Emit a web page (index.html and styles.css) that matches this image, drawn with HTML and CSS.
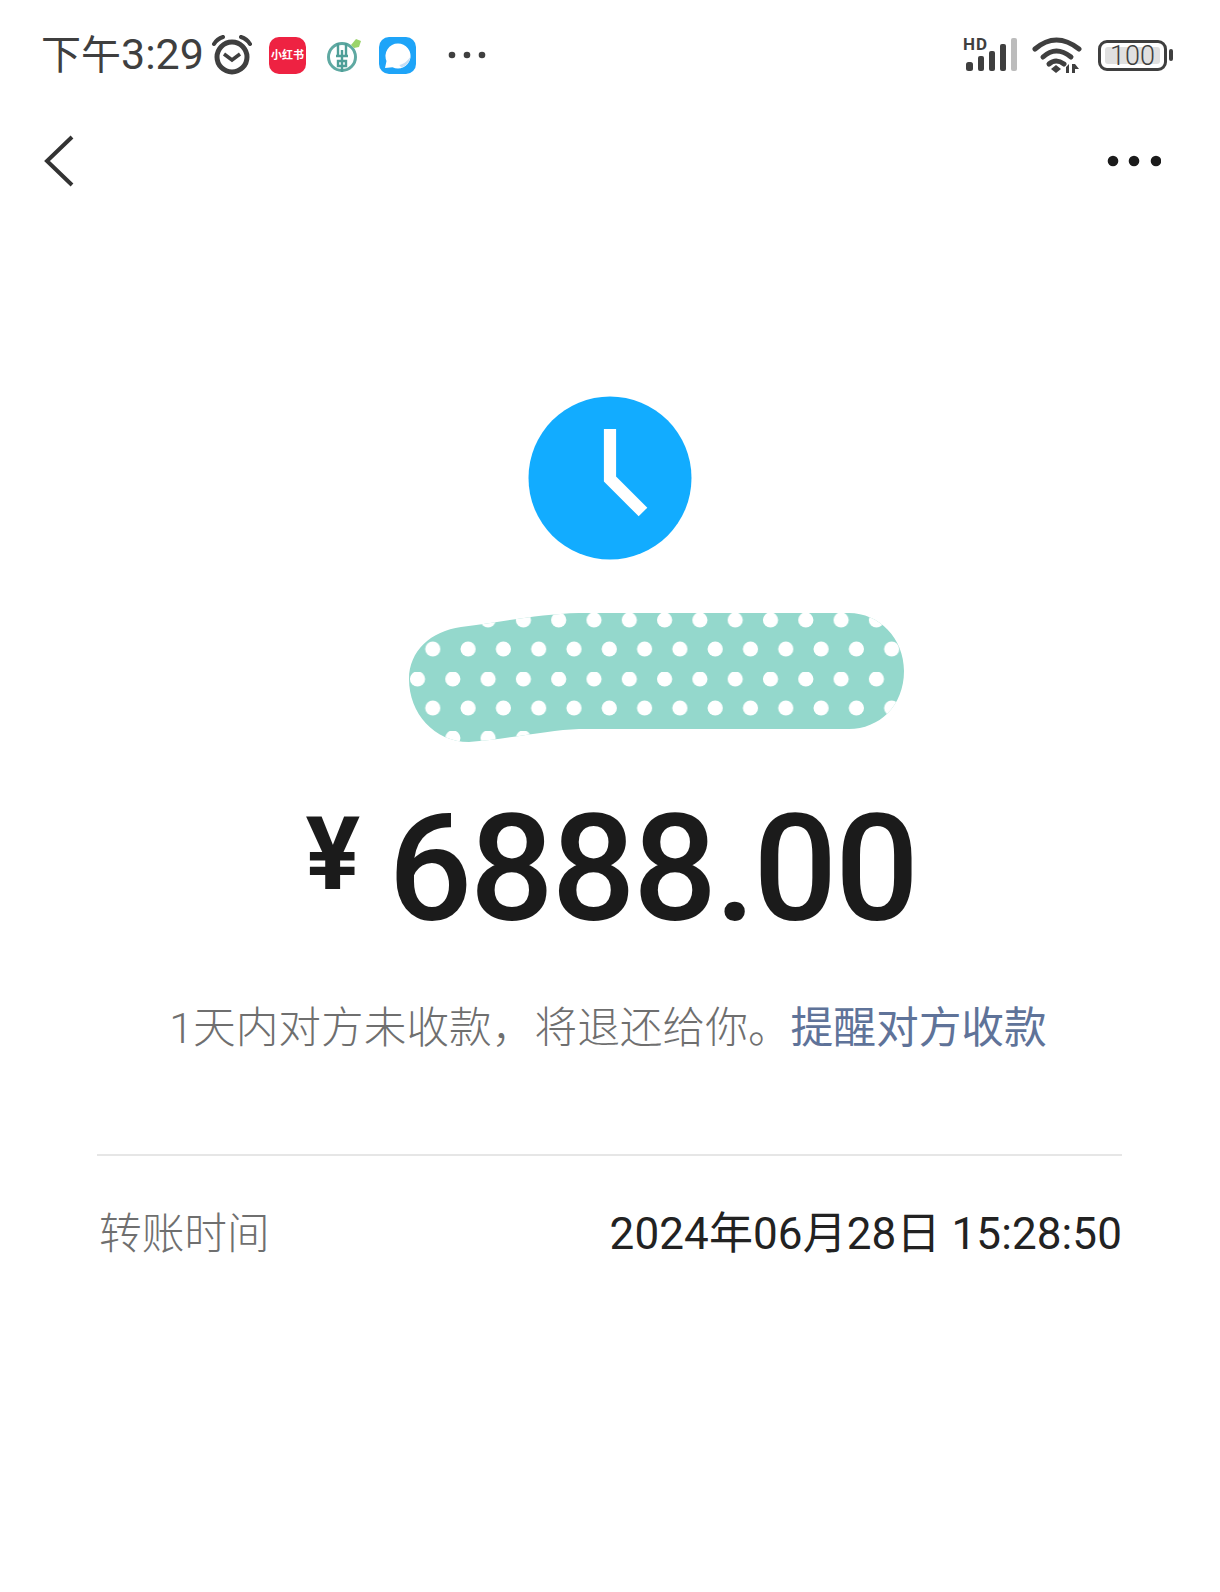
FILE: index.html
```html
<!DOCTYPE html>
<html lang="zh">
<head>
<meta charset="utf-8">
<title>转账详情</title>
<link rel="stylesheet" href="styles.css">
</head>
<body>
<div class="page">
  <header class="status">
    <div class="status-left">
      <span class="clock-text">下午<span class="clock-digits">3:29</span></span>
      <svg class="ic-alarm" viewBox="0 0 44 40" width="44" height="40">
        <circle cx="22" cy="22" r="15" fill="none" stroke="#3f3f3f" stroke-width="5"/>
        <path d="M14 19l8 6 8-6" fill="none" stroke="#3f3f3f" stroke-width="3.5"/>
        <path d="M4 9Q7 4 13 2M40 9Q37 4 31 2" fill="none" stroke="#3f3f3f" stroke-width="4" stroke-linecap="round"/>
      </svg>
      <span class="app-red">小红书</span>
      <svg class="ic-bank" viewBox="0 0 36 36" width="36" height="36">
        <circle cx="16" cy="20" r="13.5" fill="none" stroke="#5fa9a2" stroke-width="3"/>
        <path d="M12 6v13M20 6v13M10 19h12M16 13v22M12 24h8v5h-8z" fill="none" stroke="#4f9f98" stroke-width="2.4"/>
        <path d="M25 8l5-6 5 2-2 6-5 1z" fill="#9ad46a"/>
      </svg>
      <svg class="ic-msg" viewBox="0 0 37 37" width="37" height="37">
        <rect width="37" height="37" rx="10" fill="#1ea4f8"/>
        <path d="M19 6.500a12.500 12.500 0 1 1-5.500 23.700L6 31l1.500-7A12.500 12.500 0 0 1 19 6.500z" fill="#fff"/>
        <path d="M31.300 20a12.500 12.500 0 0 1-9 10.500l-2-2.500c5-1 8.500-4.500 11-8z" fill="#c5def5"/>
      </svg>
      <svg class="ic-more" viewBox="0 0 38 8" width="38" height="8">
        <circle cx="4" cy="4" r="3.300" fill="#3f3f3f"/><circle cx="19" cy="4" r="3.300" fill="#3f3f3f"/><circle cx="34" cy="4" r="3.300" fill="#3f3f3f"/>
      </svg>
    </div>
    <div class="status-right">
      <svg class="ic-signal" viewBox="0 -4 54 40" width="54" height="40">
        <text x="0" y="13" class="hd">HD</text>
        <g fill="#3f3f3f">
          <rect x="3" y="25" width="7" height="9" rx="2.500"/>
          <rect x="15" y="19" width="6" height="15" rx="2"/>
          <rect x="26" y="14" width="6" height="20" rx="2"/>
          <rect x="37" y="7" width="6" height="27" rx="2"/>
        </g>
        <rect x="48" y="1" width="6" height="33" rx="2" fill="#bcbcbc"/>
      </svg>
      <svg class="ic-wifi" viewBox="0 0 50 36" width="50" height="36">
        <g fill="none" stroke="#3f3f3f" stroke-width="5" stroke-linecap="round">
          <path d="M3 12Q24 -6 47 12"/>
          <path d="M11 20Q24 8 39 20"/>
          <path d="M17 27Q24 21 32 27"/>
        </g>
        <path d="M24 28l5 4-5 4-5-4z" fill="#3f3f3f"/>
        <path d="M34 30l3-3v9h-3zM40 27h3l4 5h-4v4h-3z" fill="#3f3f3f"/>
      </svg>
      <div class="battery">
        <div class="battery-body"><span class="battery-level">100</span></div>
        <span class="battery-nub"></span>
      </div>
    </div>
  </header>

  <nav class="nav">
    <svg class="ic-back" viewBox="0 0 30 52" width="30" height="52">
      <path d="M28 2L3 26l25 24" fill="none" stroke="#333" stroke-width="4"/>
    </svg>
    <svg class="ic-menu" viewBox="0 0 54 12" width="54" height="12">
      <circle cx="6" cy="6" r="5.300" fill="#1b1b1b"/><circle cx="27" cy="6" r="5.300" fill="#1b1b1b"/><circle cx="49" cy="6" r="5.300" fill="#1b1b1b"/>
    </svg>
  </nav>

  <main class="hero">
    <svg class="ic-clock" viewBox="0 0 164 164" width="164" height="164">
      <circle cx="82" cy="82" r="81.500" fill="#12acff"/>
      <path d="M82 33v50l33 33" fill="none" stroke="#fff" stroke-width="12.200"/>
    </svg>

    <svg class="blob" viewBox="0 0 496 132" width="496" height="132">
      <defs>
        <pattern id="dots" x="0" y="0" width="35.300" height="59" patternUnits="userSpaceOnUse">
          <circle cx="8.500" cy="7" r="7.600" fill="#fff"/>
          <circle cx="23.800" cy="36" r="7.600" fill="#fff"/>
        </pattern>
      </defs>
      <path d="M52 14C100 8 130 1 170 0H440C470 0 495 25 495 58C495 93 470 116 440 116H170C140 117 100 126 60 129C25 129 0 100 0 66C0 38 22 18 52 14Z" fill="#94d8cc"/>
      <path d="M52 14C100 8 130 1 170 0H440C470 0 495 25 495 58C495 93 470 116 440 116H170C140 117 100 126 60 129C25 129 0 100 0 66C0 38 22 18 52 14Z" fill="url(#dots)"/>
    </svg>

    <div class="amount">
      <span class="currency">¥</span>
      <span class="value">6888.00</span>
    </div>

    <p class="note">1天内对方未收款，将退还给你。<a class="remind" href="#">提醒对方收款</a></p>
  </main>

  <section class="details">
    <div class="row">
      <span class="label">转账时间</span>
      <span class="time">2024年06月28日 15:28:50</span>
    </div>
  </section>
</div>
</body>
</html>
```
FILE: styles.css
```css
* { box-sizing: border-box; }
html, body { margin: 0; padding: 0; background: #fff; }
body { font-family: "Roboto", "Noto Sans CJK SC", sans-serif; }
.page { width: 1220px; height: 1592px; overflow: hidden; }

.status { display: flex; justify-content: space-between; align-items: center; height: 38px; margin-top: 36px; padding: 0 47px 0 41px; }
.status-left, .status-right { display: flex; align-items: center; }
.clock-text { font-size: 40px; line-height: 38px; color: #3f3f3f; width: 169px; white-space: nowrap; }
.clock-digits { font-size: 43px; }
.app-red { width: 37px; height: 37px; margin-left: 15px; border-radius: 10px; background: #ee2242; color: #fff; font-size: 11px; font-weight: 700; line-height: 37px; text-align: center; white-space: nowrap; }
.ic-bank { margin-left: 20px; }
.ic-msg { margin-left: 17px; }
.ic-more { margin-left: 32px; }
.ic-signal { margin-bottom: 4px; }
.ic-wifi { margin-left: 15px; }
.hd { font: 700 17px "Roboto", sans-serif; fill: #3f3f3f; letter-spacing: 1px; }
.battery { display: flex; align-items: center; margin-left: 16px; }
.battery-body { width: 69px; height: 31px; padding: 4px; border: 3px solid #3f3f3f; border-radius: 9px; display: flex; }
.battery-level { flex: 1; background: #e0e0e0; border-radius: 3px; color: #3f3f3f; font-size: 27px; font-weight: 300; line-height: 18px; text-align: center; }
.battery-nub { width: 4px; height: 12px; margin-left: 2px; background: #3f3f3f; border-radius: 2px; }

.nav { display: flex; justify-content: space-between; align-items: center; margin-top: 61px; padding: 0 59px 0 44px; height: 52px; }

.hero { display: flex; flex-direction: column; align-items: center; margin-top: 209px; }
.ic-clock { margin-left: -1px; }
.blob { margin-top: 53px; margin-left: 93px; }

.amount { display: flex; align-items: flex-start; margin-top: 50px; height: 150px; color: #1b1b1b; margin-left: 2px; }
.currency { font-size: 102px; font-weight: 700; line-height: 118px; margin-right: 28px; }
.value { font-family: "Roboto", sans-serif; font-size: 148px; font-weight: 500; line-height: 150px; letter-spacing: -2.500px; }

.note { margin: 53px 4px 0 0; font-size: 42.700px; line-height: 60px; color: #6f6f6f; font-weight: 300; white-space: nowrap; }
.remind { color: #5f7399; text-decoration: none; font-weight: 400; }

.details { margin: 96px 98px 0 97px; border-top: 2px solid #e6e6e6; }
.row { display: flex; justify-content: space-between; align-items: center; margin-top: 48px; line-height: 60px; }
.label { color: #6f6f6f; font-size: 42.700px; font-weight: 300; margin-left: 2px; }
.time { color: #222; font-size: 44px; font-weight: 400; letter-spacing: 0.100px; }
```
